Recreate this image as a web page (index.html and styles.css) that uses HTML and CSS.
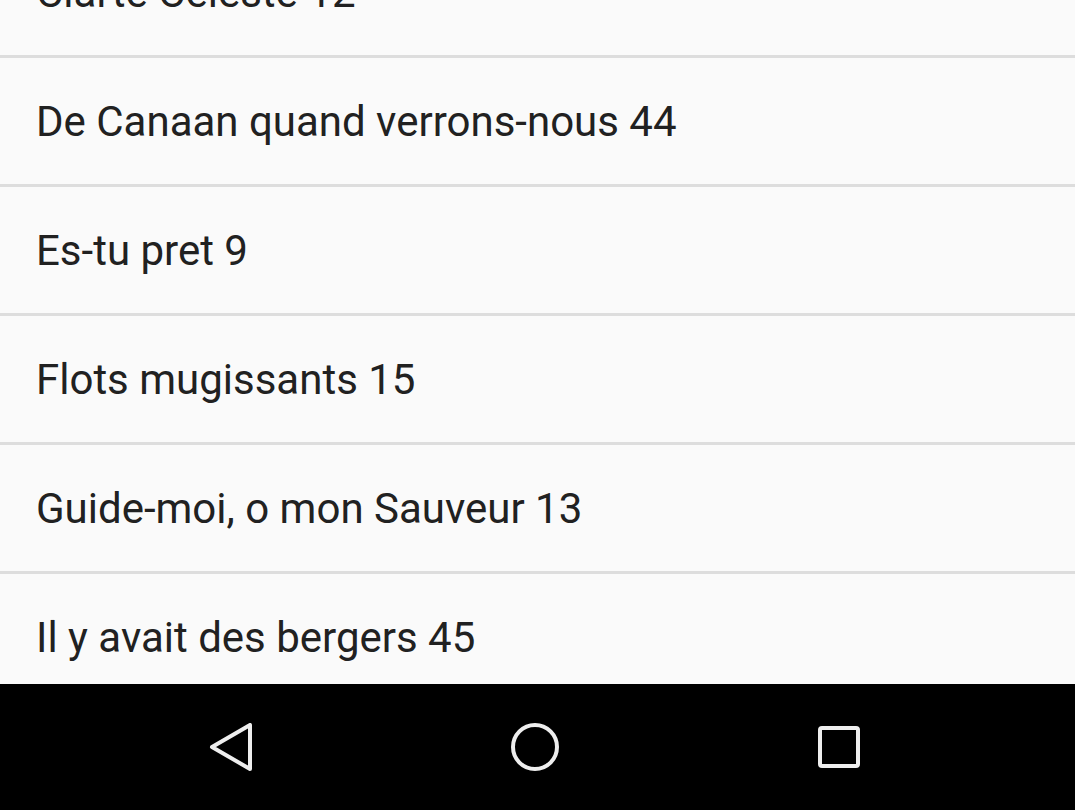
FILE: index.html
```html
<!DOCTYPE html>
<html>
<head>
<meta charset="utf-8">
<link rel="stylesheet" href="styles.css">
</head>
<body>
<div class="screen">
  <ul class="list">
    <li class="item first">Clarté Céleste 12</li>
    <li class="item">De Canaan quand verrons-nous 44</li>
    <li class="item">Es-tu pret 9</li>
    <li class="item">Flots mugissants 15</li>
    <li class="item">Guide-moi, o mon Sauveur 13</li>
    <li class="item">Il y avait des bergers 45</li>
  </ul>
  <nav class="navbar">
    <div class="navbtn">
      <svg width="48" height="48" viewBox="0 0 48 48"><path d="M43 2 L43 46 L5 24 Z" fill="none" stroke="#eeeeee" stroke-width="4" stroke-linejoin="round"/></svg>
    </div>
    <div class="navbtn">
      <svg width="48" height="48" viewBox="0 0 48 48"><circle cx="24" cy="24" r="22" fill="none" stroke="#eeeeee" stroke-width="4"/></svg>
    </div>
    <div class="navbtn">
      <svg width="48" height="48" viewBox="0 0 48 48"><rect x="5" y="5" width="38" height="38" rx="2" fill="none" stroke="#eeeeee" stroke-width="4"/></svg>
    </div>
  </nav>
</div>
</body>
</html>
```
FILE: styles.css
```css
html, body {
  margin: 0;
  padding: 0;
  background: #fafafa;
}
.screen {
  width: 1075px;
  height: 810px;
  display: flex;
  flex-direction: column;
  overflow: hidden;
}
.list {
  list-style: none;
  margin: 0;
  padding: 0;
  height: 684px;
  overflow: hidden;
  flex: none;
}
.item {
  height: 126px;
  border-bottom: 3px solid #dddddd;
  display: flex;
  align-items: center;
  padding-left: 36px;
  font-family: Roboto, "Liberation Sans", sans-serif;
  font-size: 42px;
  color: #212121;
  white-space: nowrap;
}
.item.first {
  margin-top: -71px;
}
.navbar {
  height: 126px;
  background: #000000;
  display: flex;
  justify-content: center;
  align-items: center;
  gap: 256px;
  padding-right: 5px;
}
.navbtn {
  width: 48px;
  height: 48px;
  display: flex;
}
```
